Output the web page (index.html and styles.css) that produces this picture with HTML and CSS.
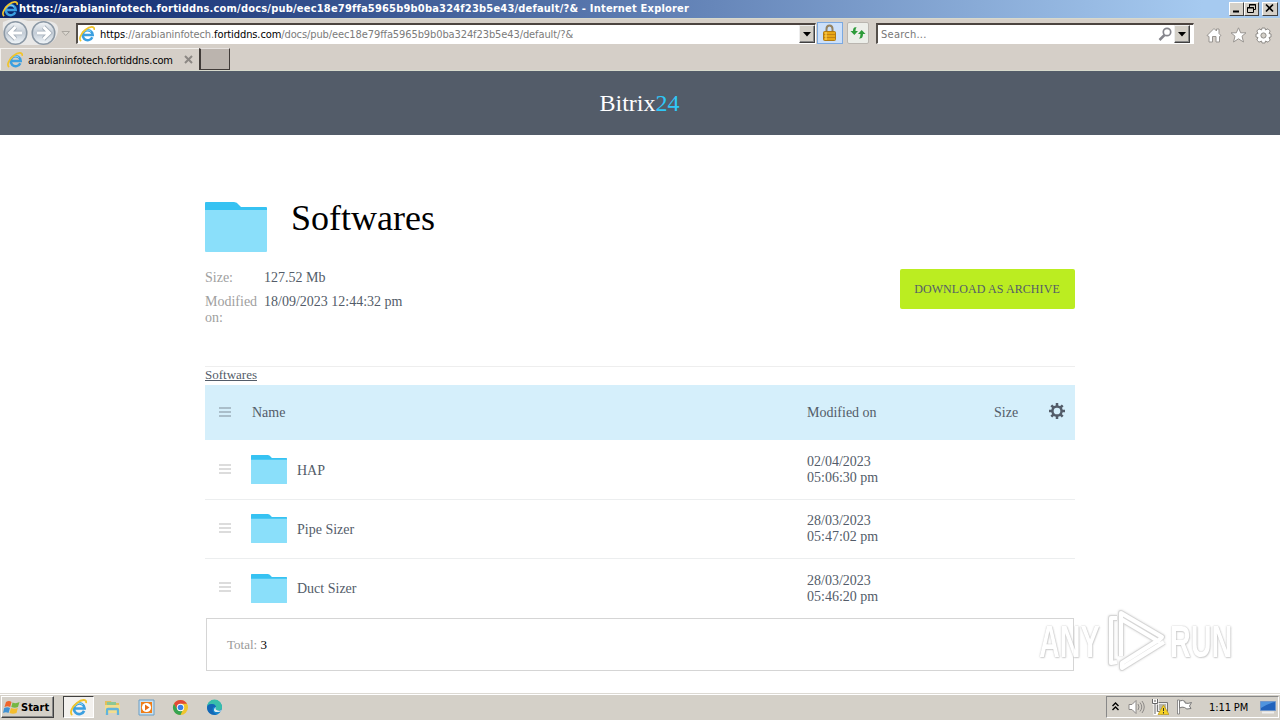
FILE: index.html
```html
<!DOCTYPE html>
<html lang="en">
<head>
<meta charset="utf-8">
<title>Softwares</title>
<link rel="stylesheet" href="styles.css">
</head>
<body>
<svg class="defs" width="0" height="0">
  <defs>
    <linearGradient id="navfill" x1="0" y1="0" x2="0" y2="1"><stop offset="0" stop-color="#f4f6f8"/><stop offset=".5" stop-color="#c3ccd6"/><stop offset="1" stop-color="#f3f8fb"/></linearGradient>
    <symbol id="ie" viewBox="0 0 16 16">
      <path d="M13.300 11.200A5 5 0 1 1 13.700 8.900H5" fill="none" stroke="#3b9fe0" stroke-width="2.500"/>
      <path d="M4.200 7A4.700 4.700 0 0 1 12 5.600" fill="none" stroke="#8bd6f8" stroke-width="1"/>
      <path d="M2.200 15C-.6 13.500 1.500 7.500 6.500 3.700 11 .2 15.800-.2 15.200 3.800" fill="none" stroke="#f0c42c" stroke-width="1.700"/>
    </symbol>
    <symbol id="folder" viewBox="0 0 62 50">
      <path d="M0 1Q0 0 1 0H29Q32 0 34 3L36 5H61Q62 5 62 6V15H0Z" fill="#36c2f2"/>
      <path d="M0 8H62V49Q62 50 61 50H1Q0 50 0 49Z" fill="#8adffa"/>
    </symbol>
    <symbol id="gear" viewBox="0 0 16 16">
      <circle cx="8" cy="8" r="4.600" fill="none" stroke="currentColor" stroke-width="2.500"/>
      <path d="M8 0V3M8 13V16M0 8H3M13 8H16M2.300 2.300L4.500 4.500M11.500 11.500L13.700 13.700M13.700 2.300L11.500 4.500M4.500 11.500L2.300 13.700" stroke="currentColor" stroke-width="2.500"/>
    </symbol>
    <symbol id="lines" viewBox="0 0 12 10"><path d="M0 1H12M0 5H12M0 9H12" stroke="currentColor" stroke-width="1.600"/></symbol>
  </defs>
</svg>
<div class="screen">
  <header class="titlebar">
    <svg class="title-icon" width="16" height="16"><use href="#ie"/></svg>
    <span class="title-text">https://arabianinfotech.fortiddns.com/docs/pub/eec18e79ffa5965b9b0ba324f23b5e43/default/?&amp; - Internet Explorer</span>
    <div class="window-buttons">
      <span class="wb"><svg width="14" height="11"><path d="M3 8.500H9" stroke="#000" stroke-width="2"/></svg></span>
      <span class="wb"><svg width="14" height="11" fill="none" stroke="#000"><path d="M4.500 4V1.500H10.500V6.500H9M4 2H11M2.500 4.500H8.500V9.500H2.500ZM2 5H9"/></svg></span>
      <span class="wb close"><svg width="14" height="11"><path d="M3 1.500L10 8.500M10 1.500L3 8.500" stroke="#000" stroke-width="1.700"/></svg></span>
    </div>
  </header>
  <div class="toolbar">
    <svg class="nav" width="74" height="29" viewBox="0 0 74 29">
      <path d="M3 4Q15-2 28 3H45Q62 3 57 17Q54 26 43 27H15Q1 24 3 4Z" fill="#e9e8e7"/>
      <g fill="url(#navfill)" stroke="#8b98a5" stroke-width="1.500"><circle cx="15.500" cy="15" r="11.300"/><circle cx="43.500" cy="15" r="11.300"/></g>
      <g fill="none" stroke="#a5afba" stroke-width="4.600"><path d="M22 15H10M15.500 9L9.500 15L15.500 21M37 15H49M43.500 9L49.500 15L43.500 21"/></g>
      <g fill="none" stroke="#fff" stroke-width="3"><path d="M22 15H10M15.500 9L9.500 15L15.500 21M37 15H49M43.500 9L49.500 15L43.500 21"/></g>
      <path d="M62 13.500H69.500L65.700 17.500Z" fill="#dcd8d1" stroke="#aaa6a0"/>
    </svg>
    <div class="field address">
      <svg width="16" height="16"><use href="#ie"/></svg>
      <span class="url"><b>https</b>://arabianinfotech.<b>fortiddns.com</b>/docs/pub/eec18e79ffa5965b9b0ba324f23b5e43/default/?&amp;</span>
      <span class="drop"><svg width="8" height="5"><path d="M0 0H8L4 4.500Z"/></svg></span>
    </div>
    <span class="tool lock"><svg width="16" height="18" viewBox="0 0 16 18"><path d="M4.500 9V5Q4.500 1.500 7.500 1.500T10.500 5V9" fill="none" stroke="#948260" stroke-width="2"/><rect x="1.500" y="7.500" width="12" height="9" rx="1" fill="#e8a715" stroke="#b07a13"/><path d="M2 10.500H13M2 13.500H13" stroke="#c48313"/><path d="M4 8V16" stroke="#ffdc6d"/></svg></span>
    <span class="tool refresh"><svg width="16" height="16" viewBox="0 0 16 16" fill="#2d9b3a"><path d="M7 2.500Q5.500 2.500 5.500 6H8L4.300 10 .5 6H3Q3 1 7 2.500ZM9 13.500Q13 14 13 9H15.500L11.700 5 8 9H10.500Q10.500 12 9 13.500Z"/></svg></span>
    <div class="field search">
      <span class="hint">Search...</span>
      <svg width="15" height="15" viewBox="0 0 15 15" fill="none" stroke="#85858c"><circle cx="9" cy="5" r="3.700" stroke-width="1.700"/><path d="M6.500 8L1.500 13" stroke-width="2.500"/></svg>
      <span class="drop"><svg width="8" height="5"><path d="M0 0H8L4 4.500Z"/></svg></span>
    </div>
    <div class="commands">
      <svg width="16" height="16" viewBox="0 0 16 16"><path d="M1 8.500L8 1.500L10.500 4V2H13V6.500L15 8.500L13.500 9.500V15H10V9.500H6.500V15H3V9.500Z" fill="#fff" stroke="#989490"/></svg>
      <svg width="17" height="16" viewBox="0 0 17 16"><path d="M8.500 .8L10.700 5.800H16L12 9.200L13.500 15L8.500 11.800L3.500 15L5 9.200L1 5.800H6.300Z" fill="#fff" stroke="#989490"/></svg>
      <svg width="17" height="17" viewBox="0 0 17 17"><g fill="#fff" stroke="#8f8c88"><path d="M7 1H10L10.500 3L13 1.800L15.200 4L14 6.500L16 7V10L14 10.500L15.200 13L13 15.200L10.500 14L10 16H7L6.500 14L4 15.200L1.800 13L3 10.500L1 10V7L3 6.500L1.800 4L4 1.800L6.500 3Z"/><circle cx="8.500" cy="8.500" r="2.600" fill="#d4d0c8"/></g></svg>
    </div>
  </div>
  <div class="tabs">
    <div class="tab">
      <svg width="16" height="16"><use href="#ie"/></svg>
      <span class="tab-text">arabianinfotech.fortiddns.com</span>
      <svg class="tab-close" width="9" height="9"><path d="M1 1L8 8M8 1L1 8" stroke="#8c8884" stroke-width="2"/></svg>
    </div>
    <div class="new-tab"></div>
  </div>
  <main class="page">
    <div class="brand">Bitrix<span>24</span></div>
    <div class="content">
      <div class="heading">
        <svg width="62" height="50"><use href="#folder"/></svg>
        <h1>Softwares</h1>
      </div>
      <div class="info">
        <dl>
          <dt>Size:</dt><dd>127.52 Mb</dd>
          <dt>Modified on:</dt><dd>18/09/2023 12:44:32 pm</dd>
        </dl>
        <a class="download">DOWNLOAD AS ARCHIVE</a>
      </div>
      <div class="crumbs"><a>Softwares</a></div>
      <div class="row head">
        <svg class="grip" width="12" height="10"><use href="#lines"/></svg>
        <span class="col-name">Name</span><span class="col-date">Modified on</span><span class="col-size">Size</span>
        <svg class="settings" width="16" height="16"><use href="#gear"/></svg>
      </div>
      <div class="row first"><svg class="grip" width="12" height="10"><use href="#lines"/></svg><svg class="mini" width="36" height="29"><use href="#folder"/></svg><span class="file">HAP</span><span class="date">02/04/2023<br>05:06:30 pm</span></div>
      <div class="row"><svg class="grip" width="12" height="10"><use href="#lines"/></svg><svg class="mini" width="36" height="29"><use href="#folder"/></svg><span class="file">Pipe Sizer</span><span class="date">28/03/2023<br>05:47:02 pm</span></div>
      <div class="row last"><svg class="grip" width="12" height="10"><use href="#lines"/></svg><svg class="mini" width="36" height="29"><use href="#folder"/></svg><span class="file">Duct Sizer</span><span class="date">28/03/2023<br>05:46:20 pm</span></div>
      <div class="total">Total: <span>3</span></div>
    </div>
    <div class="watermark">
      <span class="any">ANY</span>
      <svg width="62" height="66" viewBox="0 0 62 66" fill="none" stroke-linejoin="round"><g stroke="#cfcfcf" stroke-width="5.800"><path d="M10 9H4V54L10 53M14 47V4L55 28L51 32L14 10M57 33L15 59V54L50 32"/></g><g stroke="#fff" stroke-width="4"><path d="M10 9H4V54L10 53M14 47V4L55 28L51 32L14 10M57 33L15 59V54L50 32"/></g></svg>
      <span class="run">RUN</span>
    </div>
  </main>
  <footer class="taskbar">
    <div class="start">
      <svg width="18" height="17" viewBox="0 0 18 17"><path d="M3 3Q6 1 8.500 3L7.200 8Q4.500 6.500 1.500 8Z" fill="#ef652b"/><path d="M9.500 3.500Q13 5 16.500 3L15 8Q12 9.500 8.300 8Z" fill="#75b742"/><path d="M1.200 9Q4.500 7.500 7 9L5.500 14Q3 12.500 0 14Z" fill="#3f91d3"/><path d="M8 9Q11.500 10.500 14.800 9L13.500 14Q10 15.500 6.500 14Z" fill="#f4bd2e"/></svg>
      <span>Start</span>
    </div>
    <div class="active-task"><svg width="17" height="17"><use href="#ie"/></svg></div>
    <div class="pinned">
      <svg width="17" height="17" viewBox="0 0 17 17"><path d="M1 2H7L8 4H15V14H1Z" fill="#e3bf5c"/><path d="M3 3H12V7H3Z" fill="#8cc795"/><path d="M1 6H16V14H1Z" fill="#f3dd8e"/><path d="M3 16V11Q3 10 4 10H13Q14 10 14 11V16" fill="none" stroke="#62b4dc" stroke-width="2.300"/></svg>
      <svg width="17" height="17" viewBox="0 0 17 17"><path d="M1 1H16V16H1Z" fill="#c8e1f2" stroke="#6a9ec5"/><rect x="3" y="3" width="11" height="11" fill="#ef7e18"/><circle cx="8.500" cy="8.500" r="4.600" fill="#fff"/><path d="M7 5.500L11.500 8.500L7 11.500Z" fill="#e86d13"/></svg>
      <svg width="17" height="17" viewBox="0 0 17 17"><circle cx="8.500" cy="8.500" r="7.500" fill="#efc52e"/><path d="M2 4.700A7.500 7.500 0 0 1 15 4.800H8.500L5.200 10.500Z" fill="#e24837"/><path d="M2 4.700L5.500 10.500Q8 13 10.500 11.500L8.500 16A7.500 7.500 0 0 1 2 4.700" fill="#36a451"/><circle cx="8.500" cy="8.500" r="3.700" fill="#fff"/><circle cx="8.500" cy="8.500" r="2.800" fill="#397fe5"/></svg>
      <svg width="17" height="17" viewBox="0 0 17 17"><circle cx="8.500" cy="8.500" r="7.500" fill="#1586ce"/><path d="M1 8A7.500 7.500 0 0 1 16 8Q16 12 11 11Q9 11 10 9Q10 5 6 5Q2 5 1 8" fill="#38bfaa"/><path d="M1 9Q1 5 6 5Q9 5 10 8Q7 7 6.500 10Q6.500 14 11 15.500Q2 17 1 9" fill="#1367b5"/><path d="M10 8Q8.500 11 12 11.500Q14 12 15.500 11L14.500 12.500Q8 14 8 11Q8 9 10 8" fill="#e3eef0"/></svg>
    </div>
    <div class="tray">
      <svg class="chev" width="7" height="9"><path d="M.5 4L3.500 1L6.500 4M.5 8L3.500 5L6.500 8" fill="none" stroke="#000" stroke-width="1.400"/></svg>
      <svg width="17" height="16" viewBox="0 0 17 16" fill="none" stroke="#8c8987"><path d="M1 5.500H4L8 1.500V14.500L4 10.500H1Z" fill="#fff"/><path d="M10 5Q12 8 10 11M12 3.500Q15.500 8 12 12.500M14 2Q18.500 8 14 14"/></svg>
      <svg width="17" height="16" viewBox="0 0 17 16"><path d="M5.500 3.500H15.500V12.500H5.500Z" fill="#eee" stroke="#777"/><path d="M7 5H14V11H7Z" fill="#b7b7ad"/><path d="M1 0V4H5V0M3 4V14.500H9" fill="none" stroke="#fff" stroke-width="3"/><path d="M.5 0V4.500H5.500V0M3 5V15M3 1V3" fill="none" stroke="#666"/><path d="M11.500 6L17 15.500H6Z" fill="#f5d225" stroke="#b8931a" stroke-width=".7"/><path d="M11.500 9V12M11.500 13V14.500" stroke="#333"/></svg>
      <svg width="17" height="16" viewBox="0 0 17 16"><path d="M1.500 1H3.500V15H1.500Z" fill="#fff" stroke="#777" stroke-width=".8"/><path d="M3.500 2Q7 .5 9 2.500V4Q12 5 15.500 3.500L13.500 7L15 9.500Q10 11 8.500 8.500Q6 7.500 3.500 9Z" fill="#fff" stroke="#777"/></svg>
      <span class="clock">1:11 PM</span>
      <svg width="16" height="14" viewBox="0 0 16 14"><path d="M.5 1.500H15.500V10.500H.5Z" fill="#2263bc" stroke="#7197ca"/><path d="M1 2H15Q9 3 1 8Z" fill="#4f94de"/><path d="M2 12.500H14" stroke="#eee" stroke-width="2"/></svg>
    </div>
  </footer>
</div>
</body>
</html>
```
FILE: styles.css
```css
* { box-sizing: border-box; }
body { margin: 0; background: #fff; }
svg { display: block; flex: none; }
.defs { position: absolute; }
.screen { width: 1280px; height: 720px; display: flex; flex-direction: column; overflow: hidden; font-family: "DejaVu Sans Condensed", "DejaVu Sans", sans-serif; font-stretch: condensed; white-space: nowrap; }
.titlebar { height: 18px; flex: none; display: flex; align-items: center; background: linear-gradient(90deg, #0a246a, #a6caf0 94%); padding: 0 2px 0 2px; }
.title-text { color: #fff; font-size: 11px; font-weight: bold; line-height: 18px; margin-left: 1px; letter-spacing: .2px; }
.window-buttons { display: flex; margin-left: auto; }
.wb { width: 15px; height: 14px; background: #d4d0c8; border: 1px solid; border-color: #fff #404040 #404040 #fff; }
.wb.close { margin-left: 3px; width: 16px; }
.toolbar { height: 30px; flex: none; display: flex; align-items: flex-start; background: #d5cfc8; border-top: 1px solid #d7d9cc; }
.nav { margin-top: -1px; }
.field { display: flex; align-items: center; background: #fff; border: 1px solid #fff; border-top: 2px solid #4c4440; border-left: 2px solid #55504b; height: 21px; margin-top: 4px; font-size: 11px; }
.address { width: 740px; margin-left: 2px; padding-left: 1px; }
.url { color: #7b7b7b; margin-left: 5px; letter-spacing: -.1px; }
.url b { font-weight: normal; color: #000; }
.drop { display: flex; align-items: center; justify-content: center; width: 16px; height: 18px; margin-left: auto; background: #d4d0c8; border: 1px solid; border-color: #eee #404040 #404040 #eee; box-shadow: inset -1px -1px #888; }
.tool { display: flex; align-items: center; justify-content: center; border: 1px solid #7ba9e1; background: #cce0fa; width: 26px; height: 22px; margin: 3px 0 0 1px; }
.refresh { width: 22px; margin-left: 4px; background: #eceee9; border-color: #bab6b0; border-radius: 2px; }
.search { width: 318px; margin-left: 7px; padding-left: 3px; }
.search > svg { margin-left: auto; }
.search .drop { margin: 0 3px 0 1px; }
.hint { color: #777; letter-spacing: .25px; }
.commands { display: flex; gap: 8px; margin: 8px 0 0 12px; }
.tabs { height: 23px; flex: none; display: flex; background: #d5cfc8; border-bottom: 1px solid #d7d9cc; }
.tab { width: 199px; display: flex; align-items: center; padding-left: 6px; border-top: 1px solid #f3f1ee; border-left: 1px solid #f3f1ee; }
.tab-text { font-size: 11px; margin: 1px 0 0 5px; letter-spacing: -.16px; width: 156px; }
.new-tab { width: 31px; height: 22px; background: #bbb4ae; border: 1px solid #403b38; border-top-color: #e6e2df; border-left-width: 2px; }
.page { height: 622px; flex: none; position: relative; font-family: "Liberation Serif", serif; color: #535c69; background: #fff; }
.brand { height: 64px; background: #535c69; color: #fff; text-align: center; font-size: 24px; line-height: 65px; padding-right: 1px; }
.brand span { color: #2fc7f7; }
.content { width: 870px; margin: 0 auto; }
.heading { height: 134px; display: flex; align-items: flex-start; padding-top: 67px; }
h1 { margin: -4px 0 0 24px; font-size: 36px; line-height: 41px; font-weight: normal; color: #000; }
.info { display: flex; justify-content: space-between; height: 97px; }
dl { margin: 1px 0 0; display: grid; grid-template-columns: 59px auto; row-gap: 8px; font-size: 14px; line-height: 16px; align-content: start; }
dt { color: #a0a0a0; white-space: normal; width: 55px; }
dd { margin: 0; }
.download { width: 175px; height: 40px; background: #bbed21; border-radius: 2px; text-align: center; font-size: 12px; line-height: 40px; letter-spacing: .09px; padding-right: 1px; }
.crumbs { height: 19px; border-top: 1px solid #eee; font-size: 13px; line-height: 15px; text-decoration: underline; }
.row { height: 59px; display: flex; align-items: center; border-bottom: 1px solid #eceeef; font-size: 14px; line-height: 16px; padding-left: 14px; }
.row.head { height: 55px; background: #d5effb; border: 0; }
.row.first { height: 60px; }
.row.last { height: 60px; border: 0; }
.grip { color: #d1d1d1; margin-top: -2px; }
.last .grip { margin-top: -4px; }
.head .grip { color: #9caebb; }
.col-name { width: 555px; margin-left: 21px; }
.col-date { width: 187px; }
.col-size { width: 55px; }
.settings { margin-top: -3px; }
.mini { margin: -1px 0 0 20px; }
.first .mini { margin-top: 0; }
.last .mini { margin-top: -2px; }
.file { width: 510px; margin: 2px 0 0 10px; }
.last .file { margin-top: 0; }
.total { margin: -1px 1px 0; height: 53px; border: 1px solid #d5d5d5; padding-left: 20px; font-size: 13px; line-height: 52px; color: #999; }
.total span { color: #000; }
.watermark { position: absolute; left: 1039px; top: 538px; width: 200px; display: flex; align-items: center; font: bold 45px/60px "Liberation Sans", sans-serif; color: #fff; opacity: .85; text-shadow: 0 0 2px #aaa, 1px 1px 2px #ccc; }
.watermark svg { margin-left: 4px; filter: drop-shadow(0 0 1px #ccc); }
.any, .run { display: block; width: 64px; flex: none; transform: scaleX(.64); transform-origin: left; }
.run { margin-left: 1px; }
.taskbar { height: 27px; flex: none; display: flex; align-items: center; background: #d4d0c8; border-top: 1px solid #dcd9d3; box-shadow: inset 0 1px #fff; padding: 0 1px; }
.start { display: flex; align-items: center; width: 53px; height: 22px; border: 1px solid; border-color: #fff #404040 #404040 #fff; box-shadow: inset -1px -1px #888; padding-left: 1px; font-weight: bold; font-size: 11px; letter-spacing: 0; }
.active-task { display: flex; align-items: center; justify-content: center; width: 31px; height: 22px; margin-left: 9px; background: #f3f1ee; border: 1px solid; border-color: #404040 #fff #fff #404040; }
.pinned { display: flex; gap: 17px; margin-left: 10px; }
.tray { display: flex; align-items: center; width: 173px; height: 22px; margin-left: auto; border: 1px solid; border-color: #888 #fff #fff #888; padding-left: 5px; gap: 7px; }
.chev { margin: -2px 2px 0 0; }
.clock { font-size: 11px; width: 44px; margin-left: 9px; letter-spacing: -.1px; }
```
